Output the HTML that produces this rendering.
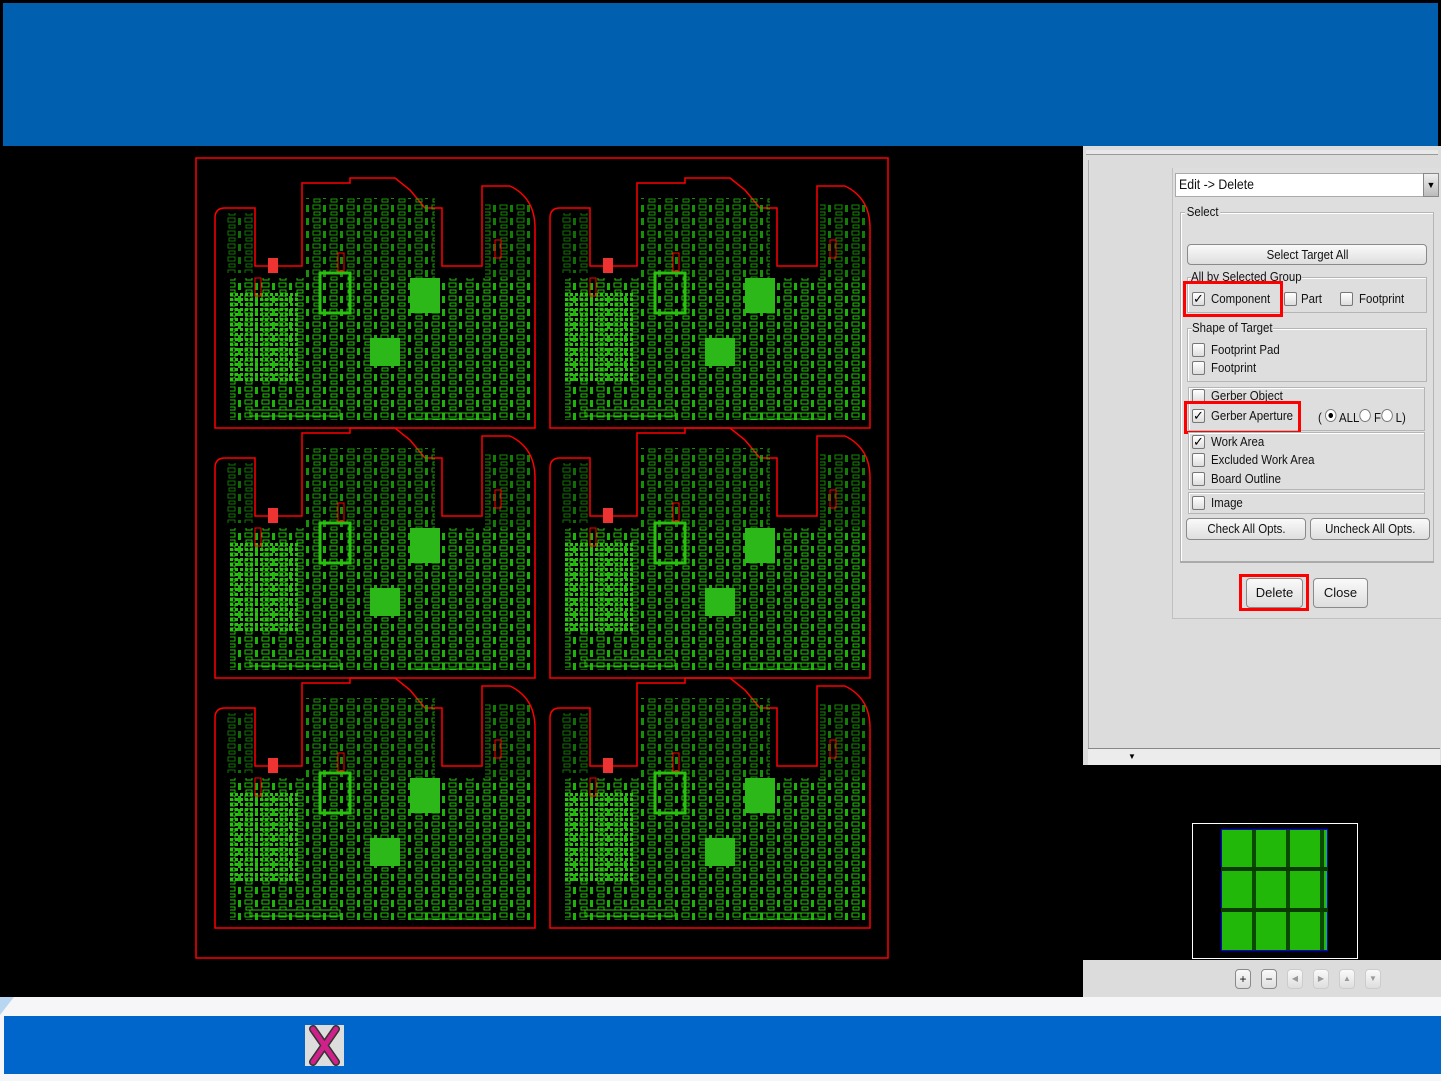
<!DOCTYPE html>
<html><head><meta charset="utf-8"><style>
body{margin:0;width:1441px;height:1081px;position:relative;overflow:hidden;background:#000;font-family:"Liberation Sans",sans-serif;}
.a{position:absolute}
.t{position:absolute;font-size:13px;color:#111;white-space:nowrap;transform:scaleX(.88);transform-origin:left center;line-height:16px}
.cb{position:absolute;width:11px;height:12px;border:1px solid #777;border-radius:2px;background:linear-gradient(#fff,#ddd);font-size:13px;line-height:12px;text-align:center;color:#000}
.btn{position:absolute;border:1px solid #8a8a8a;border-radius:4px;background:linear-gradient(#fafafa,#dedede);font-size:13px;text-align:center;color:#111}
.fs{position:absolute;border:1px solid #b5b5b5;box-shadow:1px 1px 0 #fff inset}
.red{position:absolute;border:3px solid #f00}
</style></head><body>
<div class="a" style="left:3px;top:3px;width:1435px;height:143px;background:#005fae"></div>

<svg class="a" style="left:0;top:146px" width="1083" height="851" viewBox="0 146 1083 851">
<defs>
<pattern id="p" width="17" height="13" patternUnits="userSpaceOnUse">
<rect x="1" y="1" width="7" height="4" fill="none" stroke="#22c20a" stroke-width="1"/>
<rect x="11" y="1" width="3" height="7" fill="#1db30a"/>
<rect x="2" y="8" width="6" height="3" fill="none" stroke="#22c20a"/>
</pattern>
<pattern id="q" width="5" height="5" patternUnits="userSpaceOnUse"><rect width="3" height="3" fill="#2fc015"/></pattern>
<g id="b">
<path d="M5,40 Q5,30 15,30 L45,30 L45,88 L92,88 L92,5 L140,5 L140,0 L185,0 L200,12 L215,30 L232,30 L232,88 L272,88 L272,8 L300,8 Q325,20 325,50 L325,250 L5,250 Z" fill="none" stroke="#f00" stroke-width="1.5"/>
<rect x="20" y="100" width="300" height="142" fill="url(#p)"/>
<rect x="95" y="20" width="130" height="80" fill="url(#p)" opacity=".8"/>
<rect x="275" y="25" width="45" height="75" fill="url(#p)" opacity=".7"/>
<rect x="15" y="35" width="28" height="60" fill="url(#p)" opacity=".6"/>
<rect x="20" y="115" width="70" height="90" fill="url(#q)"/>
<rect x="160" y="160" width="30" height="28" fill="#2db81a"/>
<rect x="200" y="100" width="30" height="35" fill="#2db81a"/>
<rect x="110" y="95" width="30" height="40" fill="none" stroke="#2ac010" stroke-width="3"/>
<rect x="58" y="80" width="10" height="15" fill="#e33"/>
<rect x="45" y="100" width="6" height="18" fill="none" stroke="#f00"/>
<rect x="128" y="75" width="6" height="18" fill="none" stroke="#f00"/>
<rect x="285" y="62" width="6" height="18" fill="none" stroke="#f00"/>
<rect x="40" y="232" width="90" height="6" fill="none" stroke="#2ac010"/>
<rect x="200" y="235" width="80" height="6" fill="none" stroke="#2ac010"/>
</g>
</defs>
<rect x="196" y="158" width="692" height="800" fill="none" stroke="#f00" stroke-width="1.5"/>
<use href="#b" x="210" y="178"/><use href="#b" x="545" y="178"/>
<use href="#b" x="210" y="428"/><use href="#b" x="545" y="428"/>
<use href="#b" x="210" y="678"/><use href="#b" x="545" y="678"/>
</svg>

<div class="a" style="left:1083px;top:146px;width:358px;height:619px;background:#dcdcdc"></div>
<div class="a" style="left:1086px;top:150px;width:352px;height:4px;border-bottom:1px solid #999;background:#e8e8e8"></div>
<div class="a" style="left:1088px;top:160px;width:1px;height:588px;background:#aaa"></div>
<div class="a" style="left:1088px;top:748px;width:352px;height:1px;background:#888"></div>
<div class="a" style="left:1088px;top:749px;width:352px;height:16px;background:#ececec"></div>
<div class="a" style="left:1128px;top:752px;font-size:8px">▼</div>
<div class="a" style="left:1172px;top:168px;width:268px;height:450px;border-left:1px solid #c0c0c0;border-bottom:1px solid #c0c0c0;background:#dedede"></div>
<div class="a" style="left:1175px;top:173px;width:248px;height:22px;background:#fff;border:1px solid #aaa"></div>
<div class="t" style="left:1179px;top:176px;font-size:14px">Edit -&gt; Delete</div>
<div class="a" style="left:1423px;top:173px;width:14px;height:22px;background:linear-gradient(#eee,#bbb);border:1px solid #888;font-size:9px;text-align:center;line-height:22px">▼</div>
<div class="fs" style="left:1180px;top:212px;width:252px;height:349px"></div>
<div class="t" style="left:1185px;top:204px;background:#dedede;padding:0 2px">Select</div>
<div class="btn" style="left:1187px;top:244px;width:238px;height:19px;line-height:19px"><span style="display:inline-block;transform:scaleX(.88)">Select Target All</span></div>
<div class="fs" style="left:1187px;top:277px;width:238px;height:34px"></div>
<div class="t" style="left:1191px;top:269px;background:#dedede">All by Selected Group</div>
<div class="cb" style="left:1192px;top:292px">✓</div><div class="t" style="left:1211px;top:291px">Component</div>
<div class="cb" style="left:1284px;top:292px"></div><div class="t" style="left:1301px;top:291px">Part</div>
<div class="cb" style="left:1340px;top:292px"></div><div class="t" style="left:1359px;top:291px">Footprint</div>
<div class="red" style="left:1183px;top:281px;width:94px;height:30px"></div>
<div class="fs" style="left:1187px;top:328px;width:238px;height:52px"></div>
<div class="t" style="left:1192px;top:320px;background:#dedede">Shape of Target</div>
<div class="cb" style="left:1192px;top:343px"></div><div class="t" style="left:1211px;top:342px">Footprint Pad</div>
<div class="cb" style="left:1192px;top:361px"></div><div class="t" style="left:1211px;top:360px">Footprint</div>
<div class="fs" style="left:1188px;top:387px;width:235px;height:42px"></div>
<div class="cb" style="left:1192px;top:389px"></div><div class="t" style="left:1211px;top:388px">Gerber Object</div>
<div class="cb" style="left:1192px;top:409px">✓</div><div class="t" style="left:1211px;top:408px">Gerber Aperture</div>
<div class="red" style="left:1184px;top:401px;width:111px;height:27px"></div>
<div class="t" style="left:1318px;top:409px">( <span style="display:inline-block;width:11px;height:11px;border:1px solid #777;border-radius:50%;background:radial-gradient(#000 30%,#fff 35%)"></span> ALL<span style="display:inline-block;width:11px;height:11px;border:1px solid #777;border-radius:50%;background:#fff"></span> F<span style="display:inline-block;width:11px;height:11px;border:1px solid #777;border-radius:50%;background:#fff"></span> L)</div>
<div class="fs" style="left:1188px;top:432px;width:235px;height:56px"></div>
<div class="cb" style="left:1192px;top:435px">✓</div><div class="t" style="left:1211px;top:434px">Work Area</div>
<div class="cb" style="left:1192px;top:453px"></div><div class="t" style="left:1211px;top:452px">Excluded Work Area</div>
<div class="cb" style="left:1192px;top:472px"></div><div class="t" style="left:1211px;top:471px">Board Outline</div>
<div class="fs" style="left:1188px;top:492px;width:235px;height:20px"></div>
<div class="cb" style="left:1192px;top:496px"></div><div class="t" style="left:1211px;top:495px">Image</div>
<div class="btn" style="left:1186px;top:518px;width:118px;height:20px;line-height:20px"><span style="display:inline-block;transform:scaleX(.88)">Check All Opts.</span></div>
<div class="btn" style="left:1310px;top:518px;width:118px;height:20px;line-height:20px"><span style="display:inline-block;transform:scaleX(.88)">Uncheck All Opts.</span></div>
<div class="a" style="left:1180px;top:561px;width:254px;height:2px;background:#aaa"></div>
<div class="btn" style="left:1246px;top:578px;width:55px;height:28px;line-height:28px">Delete</div>
<div class="red" style="left:1239px;top:574px;width:64px;height:31px"></div>
<div class="btn" style="left:1313px;top:578px;width:53px;height:28px;line-height:28px">Close</div>

<div class="a" style="left:1086px;top:765px;width:352px;height:195px;background:#000"></div>
<div class="a" style="left:1192px;top:823px;width:164px;height:134px;border:1px solid #fff"></div>
<div class="a" style="left:1221px;top:829px;width:105px;height:120px;border:1px solid #00f;background:repeating-linear-gradient(90deg,#22b80a 0 30px,#0a4a00 30px 34px),#22b80a"></div>
<div class="a" style="left:1221px;top:867px;width:107px;height:4px;background:#0a3a00"></div>
<div class="a" style="left:1221px;top:908px;width:107px;height:4px;background:#0a3a00"></div>
<div class="a" style="left:1083px;top:960px;width:358px;height:37px;background:#dcdcdc"></div>
<div class="btn" style="left:1235px;top:969px;width:14px;height:18px;font-size:12px;line-height:18px">+</div>
<div class="btn" style="left:1261px;top:969px;width:14px;height:18px;font-size:12px;line-height:18px">−</div>
<div class="btn" style="left:1287px;top:969px;width:14px;height:18px;font-size:8px;line-height:18px;color:#999;border-color:#ccc">◀</div>
<div class="btn" style="left:1313px;top:969px;width:14px;height:18px;font-size:8px;line-height:18px;color:#999;border-color:#ccc">▶</div>
<div class="btn" style="left:1339px;top:969px;width:14px;height:18px;font-size:8px;line-height:18px;color:#999;border-color:#ccc">▲</div>
<div class="btn" style="left:1365px;top:969px;width:14px;height:18px;font-size:8px;line-height:18px;color:#999;border-color:#ccc">▼</div>

<div class="a" style="left:0;top:997px;width:1441px;height:84px;background:#f6f6f8"></div>
<div class="a" style="left:0;top:997px;width:0;height:0;border-top:18px solid #b9d6f0;border-right:14px solid transparent"></div>
<div class="a" style="left:4px;top:1016px;width:1437px;height:58px;background:#0066cc"></div>
<div class="a" style="left:305px;top:1025px;width:39px;height:41px;background:#ddd"></div>
<svg class="a" style="left:305px;top:1025px" width="39" height="41"><path d="M8,4 L31,37 M31,4 L8,37" stroke="#333" stroke-width="8" stroke-linecap="round"/><path d="M8,4 L31,37 M31,4 L8,37" stroke="#d0208a" stroke-width="5" stroke-linecap="round"/></svg>
</body></html>
